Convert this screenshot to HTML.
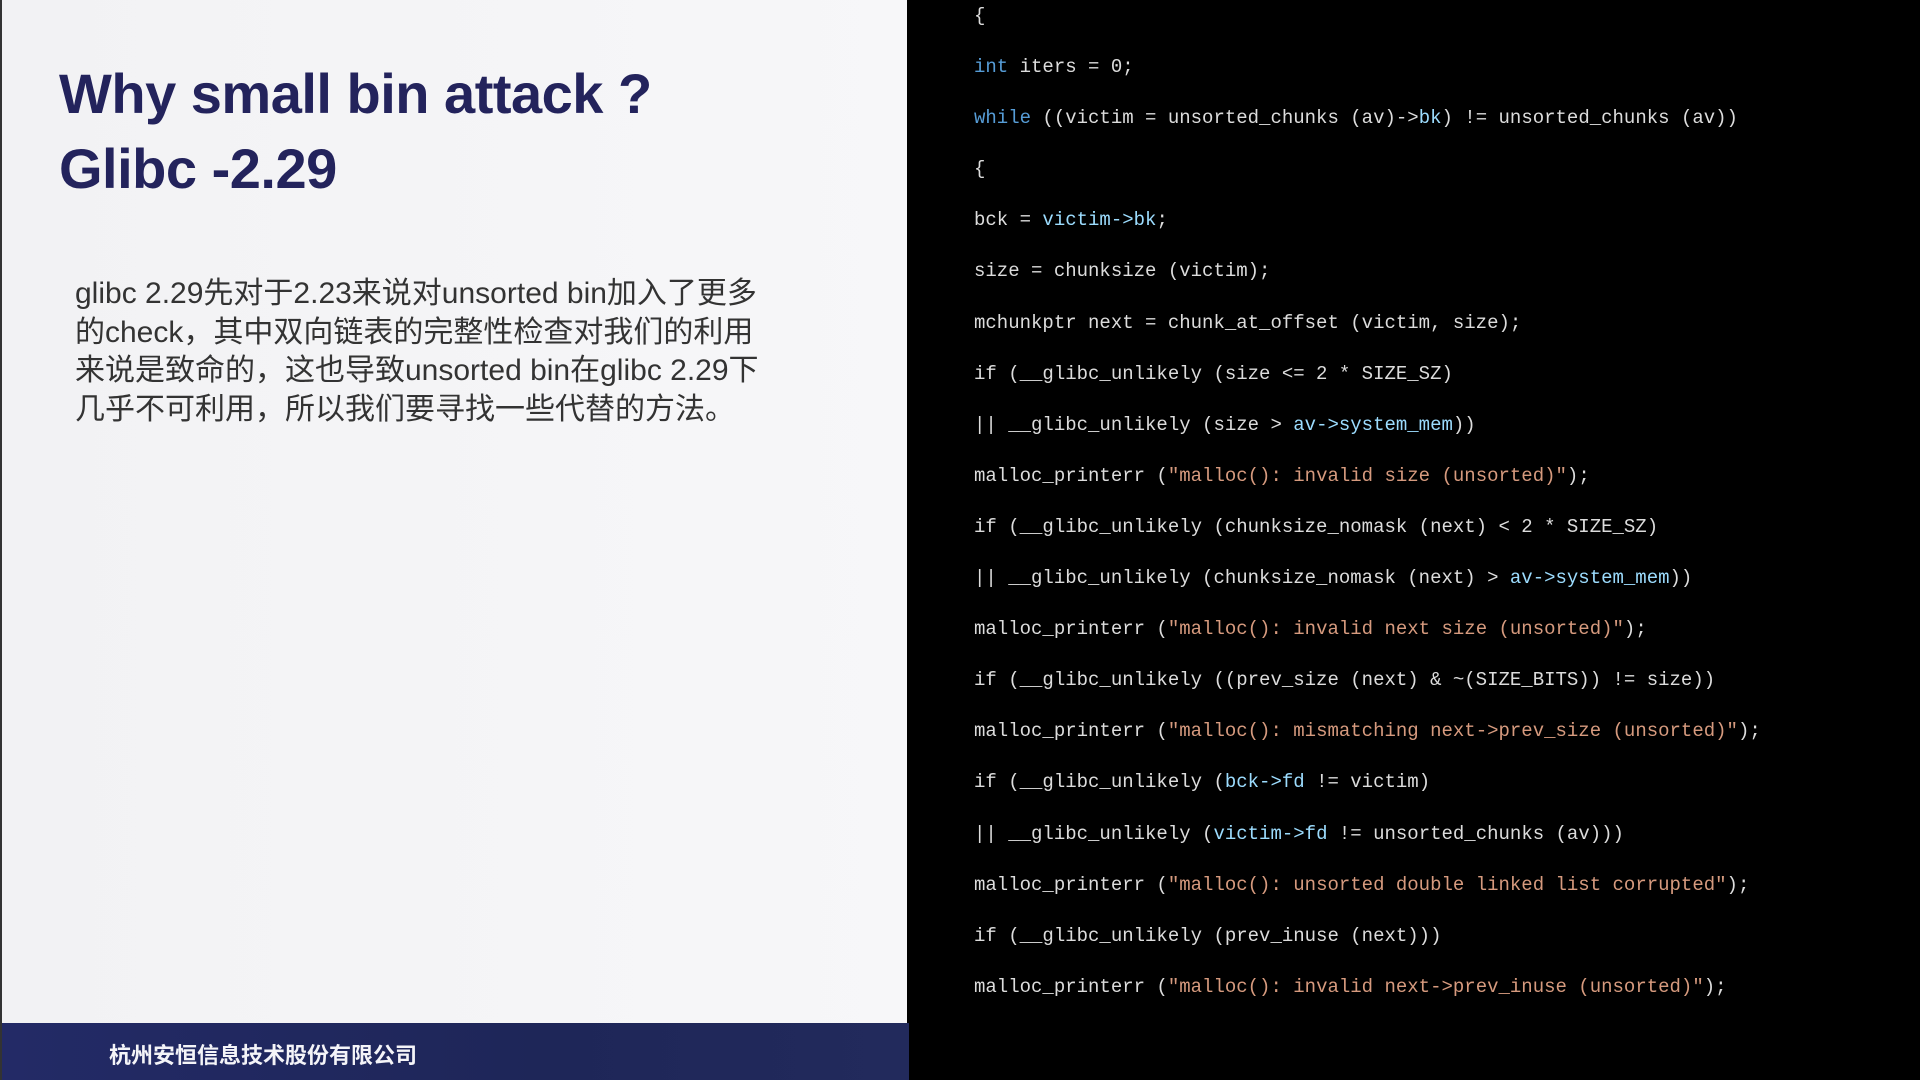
<!DOCTYPE html>
<html style="overflow:hidden"><head><meta charset="utf-8"><style>
html,body{margin:0;width:1920px;height:1080px;overflow:hidden}
body{background:#000;position:relative;font-family:"Liberation Sans","Noto Sans CJK SC",sans-serif}
#left{position:absolute;left:0;top:0;width:907px;height:1080px;background:linear-gradient(90deg,#f2f2f4,#f7f7f9);border-left:2px solid #333;box-sizing:border-box}
h1{position:absolute;left:57px;top:56px;margin:0;font-size:56px;line-height:75px;color:#23235c;font-weight:bold;letter-spacing:-0.5px}
#body{position:absolute;left:73px;top:275px;width:820px;font-size:30px;line-height:38.5px;color:#333;white-space:nowrap}
#foot{position:absolute;left:0;top:1023px;width:907px;height:57px;background:linear-gradient(90deg,#232a66,#1e2658 60%,#222a5c)}
#foot span{position:absolute;left:107px;top:15px;color:#f4f4f8;font-size:22px;font-weight:bold}
#code{position:absolute;left:974px;top:-4px;font-family:"Liberation Mono",monospace;font-size:19px;color:#dcdcdc}
#code div{height:51.1px;line-height:40px;white-space:pre}
.k{color:#569cd6}.s{color:#d69a7e}.m{color:#9cdcfe}
</style></head><body>
<div id="left">
<h1>Why small bin attack ?<br>Glibc -2.29</h1>
<div id="body">glibc 2.29先对于2.23来说对unsorted bin加入了更多<br>的check，其中双向链表的完整性检查对我们的利用<br>来说是致命的，这也导致unsorted bin在glibc 2.29下<br>几乎不可利用，所以我们要寻找一些代替的方法。</div>
<div id="foot"><span>杭州安恒信息技术股份有限公司</span></div>
</div>
<div id="code"><div>{</div><div><span class="k">int</span> iters = 0;</div><div><span class="k">while</span> ((victim = unsorted_chunks (av)-&gt;<span class="m">bk</span>) != unsorted_chunks (av))</div><div>{</div><div>bck = <span class="m">victim-&gt;bk</span>;</div><div>size = chunksize (victim);</div><div>mchunkptr next = chunk_at_offset (victim, size);</div><div>if (__glibc_unlikely (size &lt;= 2 * SIZE_SZ)</div><div>|| __glibc_unlikely (size &gt; <span class="m">av-&gt;system_mem</span>))</div><div>malloc_printerr (<span class="s">"malloc(): invalid size (unsorted)"</span>);</div><div>if (__glibc_unlikely (chunksize_nomask (next) &lt; 2 * SIZE_SZ)</div><div>|| __glibc_unlikely (chunksize_nomask (next) &gt; <span class="m">av-&gt;system_mem</span>))</div><div>malloc_printerr (<span class="s">"malloc(): invalid next size (unsorted)"</span>);</div><div>if (__glibc_unlikely ((prev_size (next) &amp; ~(SIZE_BITS)) != size))</div><div>malloc_printerr (<span class="s">"malloc(): mismatching next-&gt;prev_size (unsorted)"</span>);</div><div>if (__glibc_unlikely (<span class="m">bck-&gt;fd</span> != victim)</div><div>|| __glibc_unlikely (<span class="m">victim-&gt;fd</span> != unsorted_chunks (av)))</div><div>malloc_printerr (<span class="s">"malloc(): unsorted double linked list corrupted"</span>);</div><div>if (__glibc_unlikely (prev_inuse (next)))</div><div>malloc_printerr (<span class="s">"malloc(): invalid next-&gt;prev_inuse (unsorted)"</span>);</div></div>
</body></html>
